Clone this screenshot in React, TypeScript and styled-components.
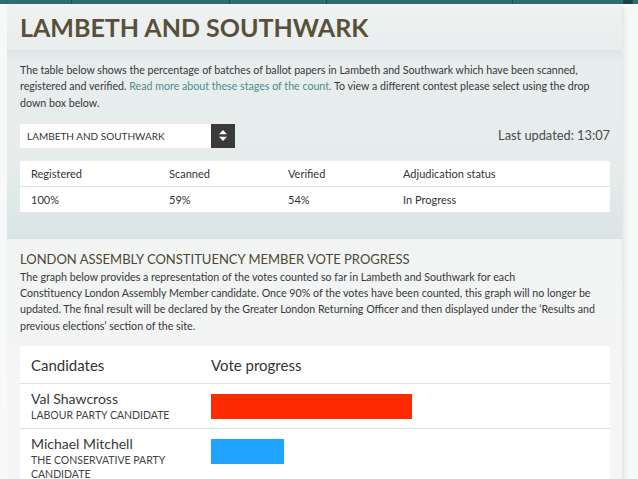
import React from "react";
import styled, { createGlobalStyle } from "styled-components";

const GlobalStyle = createGlobalStyle`
  html, body { margin: 0; padding: 0; }
  body {
    background: #f7f8f8;
    font-family: Lato, "Open Sans", sans-serif;
    color: #3a3a3a;
    width: 638px;
    height: 479px;
    overflow: hidden;
  }
`;

const TopBar = styled.div`
  display: flex;
  height: 4px;
  width: 638px;
  background: #2f6d70;
`;

const TopSeg = styled.div<{ $w: number; $dark?: boolean }>`
  width: ${(p) => p.$w}px;
  border-right: 1px solid #1f4b4d;
  background: ${(p) => (p.$dark ? "#1d3f41" : "transparent")};
  flex-shrink: 0;
`;

const Page = styled.div`
  margin-left: 7px;
  width: 615px;
  box-shadow: 4px 0 6px -3px rgba(0, 0, 0, 0.12);
`;

const TitleBlock = styled.div`
  height: 46px;
  padding-left: 13px;
  display: flex;
  align-items: center;
  background: linear-gradient(180deg, #f0f2f2 0%, #eaeded 100%);
`;

const Title = styled.h1`
  margin: 0;
  font-size: 25px;
  font-weight: 700;
  color: #575139;
`;

const InfoBlock = styled.div`
  padding: 12px 12px 27px 13px;
  background: linear-gradient(180deg, #dfe5e6 0px, #e8eded 14px, #e6ecec 60%, #dbe4e5 100%);
`;

const Para = styled.p`
  margin: 0 -12px 0 0;
  font-size: 10.65px;
  line-height: 16.3px;
  color: #383838;
`;

const Link = styled.a`
  color: #4a8f8c;
  text-decoration: none;
`;

const ControlsRow = styled.div`
  display: flex;
  justify-content: space-between;
  align-items: center;
  margin-top: 13px;
`;

const Select = styled.div`
  display: flex;
  width: 215px;
  height: 24px;
  background: #fff;
`;

const SelectText = styled.div`
  flex: 1;
  display: flex;
  align-items: center;
  padding-left: 7px;
  font-size: 10px;
  color: #333;
`;

const SelectBtn = styled.div`
  width: 24px;
  background: #3b3b3b;
  display: flex;
  align-items: center;
  justify-content: center;
`;

const Updated = styled.div`
  font-size: 12.8px;
  color: #4a4a4a;
  margin-top: -2px;
`;

const StatusTable = styled.div`
  margin-top: 13px;
  background: #fff;
  width: 590px;
`;

const StatusRow = styled.div<{ $first?: boolean }>`
  display: grid;
  grid-template-columns: 138px 119px 115px 1fr;
  height: 25px;
  align-items: center;
  padding-left: 11px;
  font-size: 11px;
  color: #333;
  border-bottom: ${(p) => (p.$first ? "1px solid #dde5e6" : "none")};
`;

const ProgressBlock = styled.div`
  padding: 12px 12px 0 13px;
  background: linear-gradient(180deg, #f2f3f3 0%, #f6f6f6 100%);
  height: 240px;
`;

const SubTitle = styled.h2`
  margin: 0 0 2px 0;
  font-size: 13px;
  font-weight: 400;
  color: #4c4836;
`;

const CandTable = styled.div`
  margin-top: 12px;
  background: #fff;
  width: 590px;
`;

const CandHead = styled.div`
  display: grid;
  grid-template-columns: 180px 1fr;
  height: 37px;
  align-items: center;
  padding-left: 11px;
  font-size: 15px;
  color: #333;
  border-bottom: 1px solid #d9e2e3;
`;

const CandRow = styled.div`
  display: grid;
  grid-template-columns: 180px 1fr;
  padding: 7px 0 6px 11px;
  border-bottom: 1px solid #d9e2e3;
`;

const Name = styled.div`
  font-size: 14px;
  color: #383838;
  line-height: 16px;
`;

const Party = styled.div`
  font-size: 10.5px;
  color: #444;
  line-height: 14px;
  margin-top: 1px;
  width: 150px;
`;

const Bar = styled.div<{ $color: string }>`
  height: 25px;
  background: ${(p) => p.$color};
  margin-top: 3px;
`;

const segs = [71, 157, 96, 185, 110, 8];

const candidates = [
  { name: "Val Shawcross", party: "LABOUR PARTY CANDIDATE", color: "#ff2a00", w: 201 },
  { name: "Michael Mitchell", party: "THE CONSERVATIVE PARTY CANDIDATE", color: "#1fa4ff", w: 73 },
];

export default function App() {
  return (
    <>
      <GlobalStyle />
      <TopBar>
        {segs.map((w, i) => (
          <TopSeg key={i} $w={w} $dark={i === segs.length - 1} />
        ))}
      </TopBar>
      <Page>
        <TitleBlock>
          <Title>LAMBETH AND SOUTHWARK</Title>
        </TitleBlock>
        <InfoBlock>
          <Para>
            The table below shows the percentage of batches of ballot papers in Lambeth and Southwark which have been scanned,
            <br />
            registered and verified. <Link>Read more about these stages of the count.</Link> To view a different contest please select using the drop
            <br />
            down box below.
          </Para>
          <ControlsRow>
            <Select>
              <SelectText>LAMBETH AND SOUTHWARK</SelectText>
              <SelectBtn>
                <svg width="8" height="11" viewBox="0 0 8 11">
                  <path d="M4 0 L8 4.2 L0 4.2 Z" fill="#fff" />
                  <path d="M4 11 L8 6.8 L0 6.8 Z" fill="#fff" />
                </svg>
              </SelectBtn>
            </Select>
            <Updated>Last updated: 13:07</Updated>
          </ControlsRow>
          <StatusTable>
            <StatusRow $first>
              <span>Registered</span>
              <span>Scanned</span>
              <span>Verified</span>
              <span>Adjudication status</span>
            </StatusRow>
            <StatusRow>
              <span>100%</span>
              <span>59%</span>
              <span>54%</span>
              <span>In Progress</span>
            </StatusRow>
          </StatusTable>
        </InfoBlock>
        <ProgressBlock>
          <SubTitle>LONDON ASSEMBLY CONSTITUENCY MEMBER VOTE PROGRESS</SubTitle>
          <Para>
            The graph below provides a representation of the votes counted so far in Lambeth and Southwark for each
            <br />
            Constituency London Assembly Member candidate. Once 90% of the votes have been counted, this graph will no longer be
            <br />
            updated. The final result will be declared by the Greater London Returning Officer and then displayed under the ‘Results and
            <br />
            previous elections’ section of the site.
          </Para>
          <CandTable>
            <CandHead>
              <span>Candidates</span>
              <span>Vote progress</span>
            </CandHead>
            {candidates.map((c) => (
              <CandRow key={c.name}>
                <div>
                  <Name>{c.name}</Name>
                  <Party>{c.party}</Party>
                </div>
                <div>
                  <Bar $color={c.color} style={{ width: c.w }} />
                </div>
              </CandRow>
            ))}
          </CandTable>
        </ProgressBlock>
      </Page>
    </>
  );
}
